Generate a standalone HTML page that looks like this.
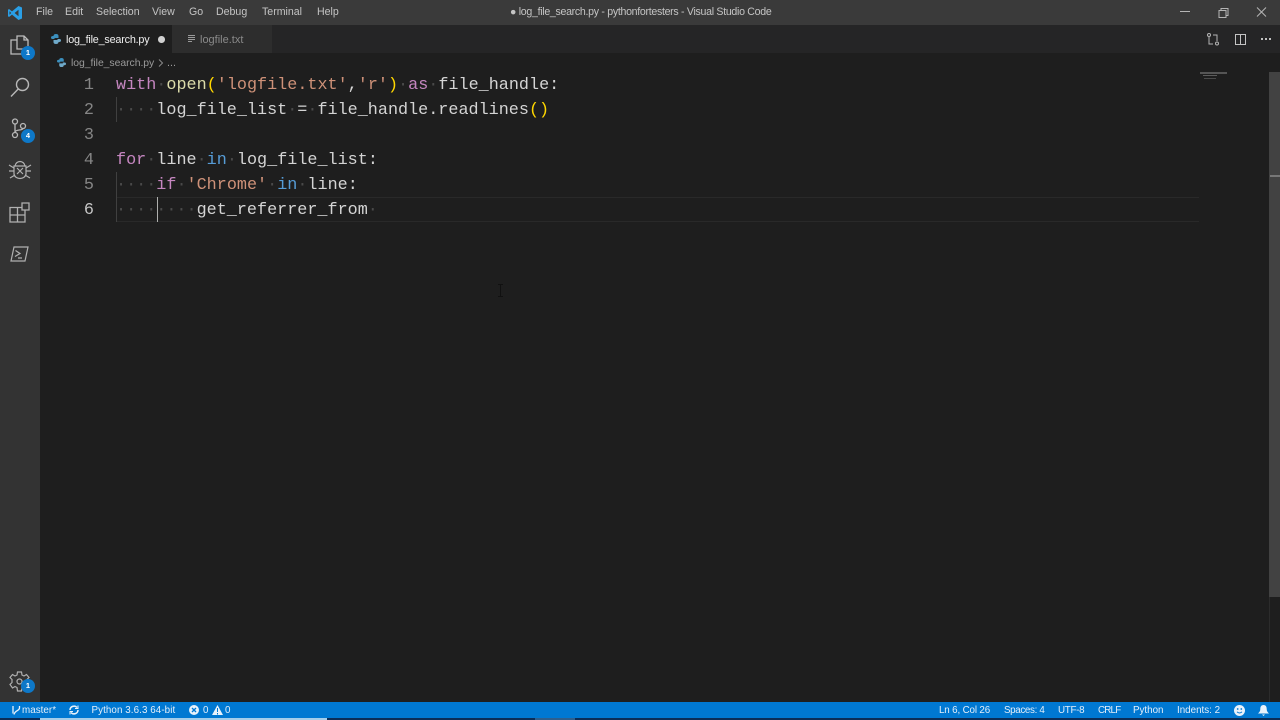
<!DOCTYPE html>
<html><head><meta charset="utf-8"><style>
html,body{margin:0;padding:0;width:1280px;height:720px;overflow:hidden;background:#1e1e1e}
*{box-sizing:border-box}
.a{position:absolute;white-space:pre}
body{font-family:"Liberation Sans",sans-serif;position:relative}
.m{top:5px;font-size:10.600px;color:#c4c4c4;line-height:14px}
.code{left:116px;font:16.8px/25px "Liberation Mono",monospace;color:#d4d4d4;height:25px}
.ln{width:40px;left:54px;text-align:right;font:16.8px/25px "Liberation Mono",monospace;color:#858585}
.k{color:#c586c0}.b{color:#569cd6}.s{color:#ce9178}.f{color:#dcdcaa}.y{color:#ffd700}.w{color:#4a4a4a}.t{color:#d4d4d4}
.st{top:704px;font-size:9.800px;line-height:14px;color:#e4effa}
.bd{position:absolute;width:14px;height:14px;border-radius:50%;background:#0e78c8;color:#fff;font-size:7.500px;font-weight:bold;line-height:14px;text-align:center}
svg{position:absolute;overflow:visible}
</style></head><body>
<div class="a" style="left:0;top:0;width:1280px;height:25px;background:#3a3a3a"></div>
<div class="a" style="left:0;top:25px;width:40px;height:677px;background:#333"></div>
<div class="a" style="left:40px;top:25px;width:1240px;height:28px;background:#252526"></div>
<div class="a" style="left:40px;top:25px;width:132px;height:28px;background:#1e1e1e"></div>
<div class="a" style="left:172px;top:25px;width:100px;height:28px;background:#2d2d2d"></div>

<svg style="left:7px;top:5px" width="16" height="16" viewBox="0 0 16 16"><path d="M11.500 1 L15 2.500 V13.500 L11.500 15 L5 9.600 L2 12 L1 11.300 V4.700 L2 4 L5 6.400 Z M11.500 4.800 L7.600 8 L11.500 11.200 Z M2.500 6.200 V9.800 L4.200 8 Z" fill="#2a9fe6" fill-rule="evenodd"/></svg>
<div class="a m" style="left:36px">File</div>
<div class="a m" style="left:65px">Edit</div>
<div class="a m" style="left:96px">Selection</div>
<div class="a m" style="left:152px">View</div>
<div class="a m" style="left:189px">Go</div>
<div class="a m" style="left:216px">Debug</div>
<div class="a m" style="left:262px">Terminal</div>
<div class="a m" style="left:317px">Help</div>
<div class="a" style="left:510px;top:5px;font-size:10.600px;letter-spacing:-.3px;line-height:14px;color:#c4c4c4">● log_file_search.py - pythonfortesters - Visual Studio Code</div>
<svg style="left:1180px;top:8px" width="90" height="10" fill="none" stroke="#b5b5b5" stroke-width="1"><path d="M0 3.500H10"/><path d="M39 2.500h7v7h-7z M41 2.500V0.500h7v7h-2"/><path d="M77 -.5 L86 8.500 M86 -.5 L77 8.500"/></svg>

<svg style="left:9px;top:34px" width="22" height="24" fill="none" stroke="#bcbcbc" stroke-width="1.300"><path d="M8 6V2H15L19 6V12"/><path d="M15 2V6H19"/><path d="M8 6H2V20H14"/><path d="M8 6V15H14"/></svg>
<div class="bd" style="left:21px;top:46px">1</div>
<svg style="left:10px;top:77px" width="20" height="20" fill="none" stroke="#b8b8b8" stroke-width="1.400"><circle cx="12.500" cy="7.500" r="6"/><path d="M8.200 12 L1 19.500"/></svg>
<svg style="left:11px;top:118px" width="18" height="22" fill="none" stroke="#b8b8b8" stroke-width="1.300"><circle cx="4" cy="3.500" r="2.500"/><circle cx="4" cy="17" r="2.500"/><circle cx="12" cy="8" r="2.500"/><path d="M4 6V14.500 M4 14 C5 11 11 13 12 10.500"/></svg>
<div class="bd" style="left:21px;top:129px">4</div>
<svg style="left:9px;top:159px" width="22" height="22" fill="none" stroke="#b0b0b0" stroke-width="1.200"><path d="M6 7C7 1 15 1 16 7"/><path d="M5 7H17V15C16 21 6 21 5 15Z"/><path d="M8 9L14 15M14 9L8 15"/><path d="M0 6L5 9M22 6L17 9M0 12H5M22 12H17M1 19L6 16M21 19L16 16"/></svg>
<svg style="left:9px;top:202px" width="22" height="21" fill="none" stroke="#b0b0b0" stroke-width="1.300"><path d="M1 5.500H16V20H1Z M1 13H16 M8.500 5.500V20"/><path d="M13 1H20V8H13Z" fill="#333"/></svg>
<svg style="left:10px;top:246px" width="20" height="16" fill="none" stroke="#b0b0b0" stroke-width="1.200"><path d="M4 1H18L15 15H1Z"/><path d="M5.500 4.500L10 7.500L5 10.500M8 12H12"/></svg>
<svg style="left:9px;top:671px" width="21" height="21" fill="none" stroke="#b0b0b0" stroke-width="1.200"><path d="M8.500 1H12.500L13 4L15 5L17.500 3.500L20 6.500L18 8.500V11.500L20 13.500L17.500 17L15 15.500L13 16.500L12.500 20H8.500L8 16.500L6 15.500L3.500 17L1 13.500L3 11.500V8.500L1 6.500L3.500 3.500L6 5L8 4Z"/><circle cx="10.500" cy="10.500" r="2.500"/></svg>
<div class="bd" style="left:21px;top:679px">1</div>

<div class="a" style="left:51px;top:34px;width:10px;height:10px;"><svg width="10" height="10" style="left:0;top:0"><path d="M2.500 2Q2.500 0 5 0Q7.500 0 7.500 2V4H3.500V5H1.500Q0 5 0 3.500Q0 2 2 2Z" fill="#3b8fbd"/><path d="M7.500 8Q7.500 10 5 10Q2.500 10 2.500 8V6H6.500V5H8.500Q10 5 10 6.500Q10 8 8 8Z" fill="#6fa9c9"/></svg></div>
<div class="a" style="left:66px;top:33px;font-size:10.800px;letter-spacing:-.2px;line-height:14px;color:#eee">log_file_search.py</div>
<div class="a" style="left:158px;top:36px;width:6.500px;height:6.500px;border-radius:50%;background:#d0d0d0"></div>
<svg style="left:188px;top:35px" width="8" height="8" stroke="#9a9a9a" stroke-width="1"><path d="M0 .5H7M0 2.500H7M0 4.500H7M0 6.500H4"/></svg>
<div class="a" style="left:200px;top:33px;font-size:11px;line-height:14px;color:#8a8a8a">logfile.txt</div>
<svg style="left:1207px;top:33px" width="12" height="13" fill="none" stroke="#b4b4b4" stroke-width="1"><circle cx="2" cy="2" r="1.500"/><circle cx="10" cy="10.500" r="1.500"/><path d="M2 4V11H6M10 8V2H6"/></svg>
<svg style="left:1235px;top:34px" width="11" height="11" fill="none" stroke="#c4c4c4" stroke-width="1"><path d="M.5 .5H10.500V10.500H.5Z M5.500 .5V10.500"/></svg>
<div class="a" style="left:1261px;top:38px;width:2px;height:2px;background:#c0c0c0;box-shadow:4px 0 #c0c0c0,8px 0 #c0c0c0"></div>

<div class="a" style="left:57px;top:58px;width:9px;height:9px"><svg width="9" height="9" style="left:0;top:0" viewBox="0 0 10 10"><path d="M2.500 2Q2.500 0 5 0Q7.500 0 7.500 2V4H3.500V5H1.500Q0 5 0 3.500Q0 2 2 2Z" fill="#3b8fbd"/><path d="M7.500 8Q7.500 10 5 10Q2.500 10 2.500 8V6H6.500V5H8.500Q10 5 10 6.500Q10 8 8 8Z" fill="#6fa9c9"/></svg></div>
<div class="a" style="left:71px;top:57px;font-size:10.400px;letter-spacing:-.03px;line-height:14px;color:#9a9a9a">log_file_search.py</div>
<svg style="left:158px;top:59px" width="6" height="8" fill="none" stroke="#8a8a8a"><path d="M1 .5L4.500 4L1 7.500"/></svg>
<div class="a" style="left:167px;top:56px;font-size:10.700px;line-height:14px;color:#9a9a9a">...</div>

<div class="a" style="left:116px;top:197px;width:1083px;height:25px;border-top:1px solid #292929;border-bottom:1px solid #292929"></div>
<div class="a" style="left:116px;top:97px;width:1px;height:25px;background:#404040"></div>
<div class="a" style="left:116px;top:172px;width:1px;height:50px;background:#404040"></div>
<div class="a" style="left:157px;top:197px;width:1px;height:25px;background:#aeafad"></div>

<div class="a ln" style="top:73px">1</div>
<div class="a ln" style="top:98px">2</div>
<div class="a ln" style="top:123px">3</div>
<div class="a ln" style="top:148px">4</div>
<div class="a ln" style="top:173px">5</div>
<div class="a ln" style="top:198px;color:#c6c6c6">6</div>

<div class="a code" style="top:73px"><span class="k">with</span><span class="w">·</span><span class="f">open</span><span class="y">(</span><span class="s">'logfile.txt'</span>,<span class="s">'r'</span><span class="y">)</span><span class="w">·</span><span class="k">as</span><span class="w">·</span>file_handle:</div>
<div class="a code" style="top:98px"><span class="w">····</span>log_file_list<span class="w">·</span>=<span class="w">·</span>file_handle.readlines<span class="y">()</span></div>
<div class="a code" style="top:148px"><span class="k">for</span><span class="w">·</span>line<span class="w">·</span><span class="b">in</span><span class="w">·</span>log_file_list:</div>
<div class="a code" style="top:173px"><span class="w">····</span><span class="k">if</span><span class="w">·</span><span class="s">'Chrome'</span><span class="w">·</span><span class="b">in</span><span class="w">·</span>line:</div>
<div class="a code" style="top:198px"><span class="w">········</span>get_referrer_from<span class="w">·</span></div>

<div class="a" style="left:1200px;top:72px;width:27px;height:2px;background:#555"></div>
<div class="a" style="left:1203px;top:75px;width:14px;height:1px;background:#5c5c5c"></div>
<div class="a" style="left:1204px;top:78px;width:12px;height:1px;background:#4a4a4a"></div>
<div class="a" style="left:1269px;top:72px;width:11px;height:525px;background:#424242"></div>
<div class="a" style="left:1270px;top:175px;width:10px;height:2px;background:#777"></div>
<div class="a" style="left:1269px;top:597px;width:1px;height:105px;background:#2c2c2c"></div>
<svg style="left:497px;top:284px" width="7" height="13" fill="none" stroke="#111" stroke-width="1"><path d="M1 .5H6M3.500 .5V12.500M1 12.500H6"/></svg>

<div class="a" style="left:0;top:702px;width:1280px;height:16px;background:#0078d2"></div>
<div class="a" style="left:0;top:718px;width:1280px;height:2px;background:#0b2d58"></div>
<div class="a" style="left:40px;top:718px;width:287px;height:2px;background:#a4cdea"></div>
<div class="a" style="left:535px;top:718px;width:40px;height:2px;background:#2d5f8e"></div>

<svg style="left:12px;top:705px" width="9" height="11" fill="none" stroke="#e8f2fb" stroke-width="1.300"><path d="M1 1V8.500M7.500 1V3C7.500 6 3 5 2 9.500"/></svg>
<div class="a st" style="left:22px;letter-spacing:.05px">master*</div>
<svg style="left:69px;top:705px" width="10" height="10" fill="none" stroke="#e8f2fb" stroke-width="1.500"><path d="M1 5A4 4 0 0 1 8 2.500M9 5A4 4 0 0 1 2 7.500"/><path d="M9 .5V3.500H6M1 9.500V6.500H4" stroke-width="1"/></svg>
<div class="a st" style="left:91.500px;letter-spacing:.08px">Python 3.6.3 64-bit</div>
<svg style="left:189px;top:705px" width="10" height="10"><circle cx="5" cy="5" r="5" fill="#e8f2fb"/><path d="M3 3L7 7M7 3L3 7" stroke="#0078d2" stroke-width="1.300"/></svg>
<div class="a st" style="left:203px">0</div>
<svg style="left:212px;top:705px" width="11" height="10"><path d="M5.500 0L11 10H0Z" fill="#e8f2fb"/><path d="M5.500 3V7M5.500 8V9.500" stroke="#0078d2"/></svg>
<div class="a st" style="left:225px">0</div>

<div class="a st" style="left:939px;letter-spacing:-.15px">Ln 6, Col 26</div>
<div class="a st" style="left:1004px;letter-spacing:-.35px">Spaces: 4</div>
<div class="a st" style="left:1058px;letter-spacing:-.3px">UTF-8</div>
<div class="a st" style="left:1098px;letter-spacing:-.8px">CRLF</div>
<div class="a st" style="left:1133px">Python</div>
<div class="a st" style="left:1177px">Indents: 2</div>
<svg style="left:1234px;top:705px" width="11" height="11"><circle cx="5.500" cy="5.500" r="5.500" fill="#e8f2fb"/><circle cx="3.700" cy="4" r=".9" fill="#0078d2"/><circle cx="7.300" cy="4" r=".9" fill="#0078d2"/><path d="M3 6.800Q5.500 9.200 8 6.800" stroke="#0078d2" fill="none"/></svg>
<svg style="left:1258px;top:705px" width="11" height="11"><path d="M5.500 0C8 0 8.700 2 8.700 4C8.700 6 9.500 7 11 8.500H0C1.500 7 2.300 6 2.300 4C2.300 2 3 0 5.500 0Z" fill="#e8f2fb"/><path d="M4 9.500H7L5.500 11Z" fill="#e8f2fb"/></svg>
</body></html>
